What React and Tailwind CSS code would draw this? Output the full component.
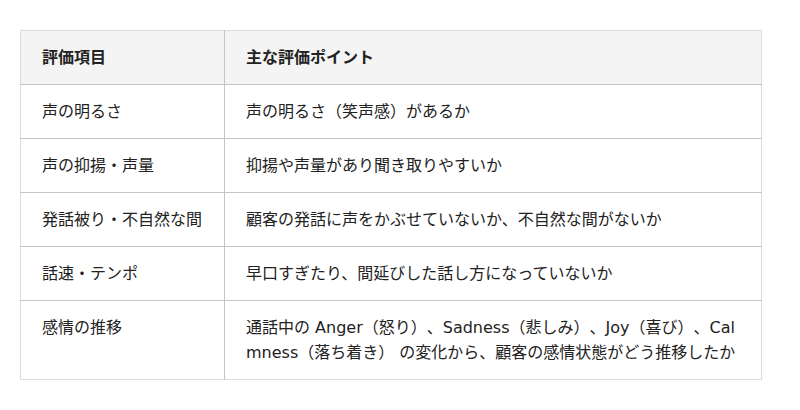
import React from 'react';

const rows = [
  ['声の明るさ', '声の明るさ（笑声感）があるか'],
  ['声の抑揚・声量', '抑揚や声量があり聞き取りやすいか'],
  ['発話被り・不自然な間', '顧客の発話に声をかぶせていないか、不自然な間がないか'],
  ['話速・テンポ', '早口すぎたり、間延びした話し方になっていないか'],
  ['感情の推移', '通話中の Anger（怒り）、Sadness（悲しみ）、Joy（喜び）、Calmness（落ち着き） の変化から、顧客の感情状態がどう推移したか'],
];

const App = () => {
  return (
    <div
      className="w-[800px] h-[410px] bg-white pt-[30px] pl-[20px] [text-spacing-trim:space-all]"
      style={{ fontFamily: '"DejaVu Sans", "Noto Sans CJK JP", sans-serif' }}
    >
      <table className="w-[742px] border-collapse border border-[#dcdcdc] text-[16px] leading-[25px] text-[#222]">
        <thead>
          <tr className="bg-[#f4f4f4]">
            <th className="w-[204px] border-b border-r border-[#c4c4c4] px-[21px] py-[14px] text-left font-bold">
              評価項目
            </th>
            <th className="border-b border-[#c4c4c4] px-[21px] py-[14px] text-left font-bold">
              主な評価ポイント
            </th>
          </tr>
        </thead>
        <tbody>
          {rows.map(([item, point], i) => (
            <tr key={item}>
              <td
                className={`border-r border-[#c4c4c4] px-[21px] py-[14px] align-top ${
                  i < rows.length - 1 ? 'border-b' : ''
                }`}
              >
                {item}
              </td>
              <td
                className={`border-[#c4c4c4] px-[21px] py-[14px] align-top break-all ${
                  i < rows.length - 1 ? 'border-b' : ''
                }`}
              >
                {point}
              </td>
            </tr>
          ))}
        </tbody>
      </table>
    </div>
  );
};

export default App;
